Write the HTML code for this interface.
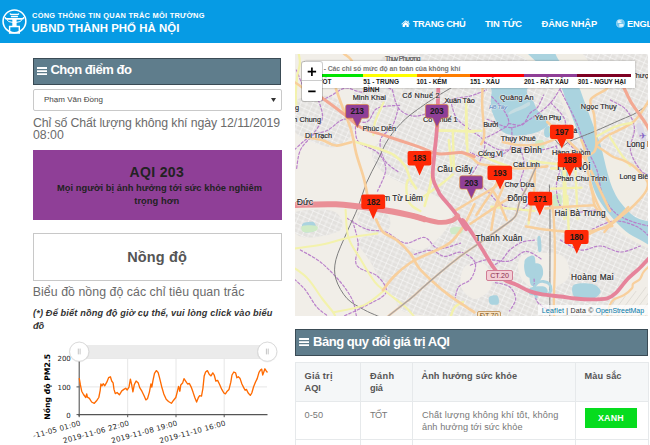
<!DOCTYPE html>
<html lang="vi">
<head>
<meta charset="utf-8">
<title>Cổng thông tin quan trắc môi trường - UBND Thành phố Hà Nội</title>
<style>
html,body{margin:0;padding:0;}
body{width:650px;height:445px;overflow:hidden;background:#fff;position:relative;font-family:"Liberation Sans","DejaVu Sans",sans-serif;color:#333;}
.a{position:absolute;box-sizing:border-box;}
.t{position:absolute;white-space:nowrap;}
#hdr{position:absolute;left:0;top:0;width:650px;height:43px;background:#069be4;}
.bar{position:absolute;background:#5f7d8c;border:1px solid #3a4b55;box-sizing:border-box;}
#map{position:absolute;left:294.6px;top:54px;width:353.4px;height:262px;background:#f1eee8;overflow:hidden;}
#map .t{margin-top:-54px;transform:translateX(-294.6px);}
.cell{position:absolute;box-sizing:border-box;border:1px solid #e6e9eb;}
</style>
</head>
<body>

<div id="hdr"></div>
<svg class="a" style="left:0;top:5px" width="32" height="33" viewBox="0 5 32 33">
<circle cx="14.45" cy="21.3" r="11.4" fill="none" stroke="#fff" stroke-width="1.550"/>
<g fill="none" stroke="#fff" stroke-linecap="round" stroke-linejoin="round">
<path d="M10.300 13.900q.5.700 1.300.6h5.700q.8.100 1.300-.6" stroke-width="1.300"/>
<path d="M11.400 16.700h6.100" stroke-width="1.200"/>
<path d="M5.300 17.700q.2 1.200 1.500 1.200h15.300q1.300 0 1.500-1.200" stroke-width="1.600"/>
<path d="M6.900 19.900q1 2.400 5.600 2.500M22 19.900q-1 2.400-5.600 2.500" stroke-width="1"/>
<path d="M9.600 26.500h9.700v6.600h-9.700z" stroke-width="1.400" stroke-linejoin="miter"/>
</g>
<path d="M12.300 19h4.300v7h-4.300z" fill="#fff"/>
</svg>
<svg class="a" style="left:400.9px;top:19.500px" width="9.4" height="7.6" viewBox="0 0 18 14.5"><path d="M9 0.600L0.600 7.600l1 1.200L9 2.700l7.400 6.100 1-1.200-2.700-2.300V1.500h-2v2.100zM3.100 8.700v5.300h4.400v-3.800h3v3.800h4.400V8.700L9 3.800z" fill="#fff"/></svg>
<svg class="a" style="left:616px;top:18.8px" width="8.8" height="8.8" viewBox="0 0 16 16"><circle cx="8" cy="8" r="7.3" fill="#fff" opacity="0.42"/><path d="M3 2.500h7v2H7.500v1H10v2H3zM6 9h7.500v5H6z" fill="#fff" opacity="0.8"/><path d="M8 0.700a7.300 7.300 0 1 0 0 14.600a7.300 7.300 0 1 0 0-14.600" fill="none" stroke="#fff" stroke-width="0.9" opacity="0.75"/></svg>
<div class="bar" style="left:33px;top:57.7px;width:248.2px;height:27.1px;"></div>
<svg class="a" style="left:36.8px;top:66.6px" width="10.4" height="8.2" viewBox="0 0 10.4 8.2"><path d="M0 0h10.400v1.900H0zM0 3.150h10.400v1.900H0zM0 6.300h10.400v1.900H0z" fill="#fff"/></svg>
<div class="a" style="left:33px;top:89.2px;width:248.5px;height:21.5px;border:1px solid #c9c9c9;border-radius:2px;background:#fff;"></div>
<svg class="a" style="left:270.6px;top:98.2px" width="5" height="4" viewBox="0 0 5 4"><path d="M0 0h5L2.500 4z" fill="#333"/></svg>
<div class="a" style="left:33px;top:149.5px;width:248.5px;height:70.6px;background:#8f3f97;"></div>
<div class="a" style="left:32.6px;top:233.2px;width:249px;height:48px;border:1px solid #c8c8c8;background:#fff;"></div>
<svg width="260" height="115" viewBox="33 335 260 115" style="position:absolute;left:33px;top:335px;overflow:hidden;" font-family='DejaVu Sans, Liberation Sans, sans-serif'><line x1="127.7" y1="358" x2="127.7" y2="414.5" stroke="#e6e6e6" stroke-width="1"/><line x1="176" y1="358" x2="176" y2="414.5" stroke="#e6e6e6" stroke-width="1"/><line x1="224.2" y1="358" x2="224.2" y2="414.5" stroke="#e6e6e6" stroke-width="1"/><line x1="79" y1="358.4" x2="267" y2="358.4" stroke="#e6e6e6" stroke-width="1"/><line x1="79" y1="386.9" x2="267" y2="386.9" stroke="#e6e6e6" stroke-width="1"/><rect x="79" y="345" width="188" height="13.4" fill="#ebebeb"/><line x1="79.2" y1="358" x2="79.2" y2="416.2" stroke="#555" stroke-width="1.1"/><line x1="78" y1="414.6" x2="267.5" y2="414.6" stroke="#555" stroke-width="1.1"/><line x1="79.2" y1="414.6" x2="79.2" y2="417.2" stroke="#555" stroke-width="1"/><line x1="127.7" y1="414.6" x2="127.7" y2="417.2" stroke="#555" stroke-width="1"/><line x1="176" y1="414.6" x2="176" y2="417.2" stroke="#555" stroke-width="1"/><line x1="224.2" y1="414.6" x2="224.2" y2="417.2" stroke="#555" stroke-width="1"/><line x1="76.5" y1="358.4" x2="79.2" y2="358.4" stroke="#555" stroke-width="1"/><line x1="76.5" y1="386.9" x2="79.2" y2="386.9" stroke="#555" stroke-width="1"/><line x1="76.5" y1="414.6" x2="79.2" y2="414.6" stroke="#555" stroke-width="1"/><path d="M79.3 378.6 L80.4 384.9 L81.7 391.2 L83.5 394.5 L85.8 397.5 L86.7 393.9 L87.4 397.2 L89.4 398.4 L91.6 402.0 L94.3 403.3 L97.0 400.2 L98.8 397.5 L100.2 390.3 L100.9 384.0 L102.0 385.8 L103.3 383.7 L104.7 385.8 L106.8 382.2 L108.6 377.7 L110.4 376.8 L111.7 381.0 L113.1 382.8 L114.0 389.4 L115.3 393.6 L117.1 392.5 L119.4 394.8 L121.8 390.9 L123.9 389.4 L125.7 388.2 L127.2 390.0 L129.0 387.1 L130.4 379.2 L131.7 384.9 L132.9 391.8 L134.3 384.6 L136.1 381.0 L138.3 383.1 L139.7 387.6 L141.9 391.2 L144.1 395.7 L145.9 399.9 L147.6 398.4 L149.4 392.1 L150.9 384.0 L151.8 387.1 L153.0 380.4 L154.5 373.3 L156.3 370.6 L158.1 372.4 L159.5 377.7 L161.7 386.7 L163.8 393.9 L166.2 399.3 L168.5 401.5 L171.4 403.3 L173.6 400.2 L175.8 397.5 L177.2 392.1 L178.6 386.4 L179.9 391.2 L180.8 384.9 L182.6 383.1 L184.0 378.6 L185.8 381.3 L187.6 384.0 L189.4 383.5 L191.2 387.1 L193.0 392.1 L194.8 397.5 L196.6 402.0 L198.4 397.5 L199.7 395.7 L201.5 396.1 L202.9 388.5 L204.2 375.9 L205.6 372.0 L207.4 370.6 L209.2 374.2 L211.0 375.9 L212.8 372.9 L214.2 375.0 L215.8 381.0 L217.6 380.4 L219.4 384.0 L221.8 389.4 L223.9 393.0 L225.4 393.9 L227.2 391.2 L229.0 389.4 L230.8 382.2 L232.0 375.0 L233.8 372.0 L235.6 372.9 L236.9 377.7 L238.3 376.8 L240.1 378.6 L241.9 384.0 L243.7 387.6 L245.1 390.3 L246.4 389.4 L248.2 393.0 L250.3 395.4 L251.8 393.0 L253.6 386.7 L255.4 382.2 L257.2 378.6 L259.0 372.4 L260.8 369.7 L261.7 369.1 L262.7 375.0 L263.8 372.0 L264.9 368.8 L266.2 370.9 L267.1 372.0" fill="none" stroke="#ff6a00" stroke-width="1.35" stroke-linejoin="round" stroke-linecap="round"/><circle cx="79.2" cy="352" r="10.4" fill="#000" opacity="0.06"/><circle cx="79.2" cy="351.7" r="9.6" fill="#fff" stroke="#d4d4d4" stroke-width="0.8"/><path d="M78.3 348.6V354.4M80.1 348.6V354.4" stroke="#aaa" stroke-width="0.7"/><circle cx="267.3" cy="352" r="10.4" fill="#000" opacity="0.06"/><circle cx="267.3" cy="351.7" r="9.6" fill="#fff" stroke="#d4d4d4" stroke-width="0.8"/><path d="M266.4 348.6V354.4M268.2 348.6V354.4" stroke="#aaa" stroke-width="0.7"/><text x="70.8" y="361.0" text-anchor="end" font-size="7" fill="#222">200</text><text x="70.8" y="389.5" text-anchor="end" font-size="7" fill="#222">100</text><text x="70.8" y="417.5" text-anchor="end" font-size="7" fill="#222">0</text><text transform="translate(49.6 386.8) rotate(-90)" text-anchor="middle" font-size="7.700" font-weight="bold" fill="#000">Nồng độ PM2.5</text><text transform="translate(81.2 425.2) rotate(-15.3)" text-anchor="end" font-size="7.200" letter-spacing="0.22" fill="#222">2019-11-05 01:00</text><text transform="translate(129.7 425.2) rotate(-15.3)" text-anchor="end" font-size="7.200" letter-spacing="0.22" fill="#222">2019-11-06 22:00</text><text transform="translate(178.0 425.2) rotate(-15.3)" text-anchor="end" font-size="7.200" letter-spacing="0.22" fill="#222">2019-11-08 19:00</text><text transform="translate(226.2 425.2) rotate(-15.3)" text-anchor="end" font-size="7.200" letter-spacing="0.22" fill="#222">2019-11-10 16:00</text></svg>
<div id="map">
<svg id="mapsvg" width="353.4" height="262" viewBox="294.6 54 353.4 262" style="position:absolute;left:0;top:0;">
<defs><filter id="mb" x="-5%" y="-5%" width="110%" height="110%"><feGaussianBlur stdDeviation="0.45"/></filter></defs>
<defs><pattern id="st" width="11" height="9" patternUnits="userSpaceOnUse" patternTransform="rotate(24)"><path d="M0 2.500H11M0 7H11M3 0V9M8.500 0V9" stroke="#fff" stroke-width="0.8" fill="none" opacity="0.6"/></pattern></defs>
<g filter="url(#mb)">
<rect x="290" y="50" width="365" height="270" fill="#f1eee8"/>
<path d="M398 54C439.3 49.7 606.3 10.3 648 54C689.7 97.7 684.3 272.3 648 316C611.7 359.7 472.7 319.3 430 316C387.3 312.7 402 305 392 296C382 287 375.7 271.3 370 262C364.3 252.7 355.3 244.3 358 240C360.7 235.7 376 234.3 386 236C396 237.7 409 250 418 250C427 250 434.3 242 440 236C445.7 230 452.7 220.7 452 214C451.3 207.3 444 201 436 196C428 191 413.3 188.3 404 184C394.7 179.7 385.3 175.7 380 170C374.7 164.3 370 156.3 372 150C374 143.7 386.7 139 392 132C397.3 125 402.7 116.7 404 108C405.3 99.3 401 89 400 80C399 71 356.7 58.3 398 54Z" fill="#e3e1de"/>
<path d="M398 54C439.3 49.7 606.3 10.3 648 54C689.7 97.7 684.3 272.3 648 316C611.7 359.7 472.7 319.3 430 316C387.3 312.7 402 305 392 296C382 287 375.7 271.3 370 262C364.3 252.7 355.3 244.3 358 240C360.7 235.7 376 234.3 386 236C396 237.7 409 250 418 250C427 250 434.3 242 440 236C445.7 230 452.7 220.7 452 214C451.3 207.3 444 201 436 196C428 191 413.3 188.3 404 184C394.7 179.7 385.3 175.7 380 170C374.7 164.3 370 156.3 372 150C374 143.7 386.7 139 392 132C397.3 125 402.7 116.7 404 108C405.3 99.3 401 89 400 80C399 71 356.7 58.3 398 54Z" fill="url(#st)"/>
<path d="M294 102.6C296.8 97.1 304.2 98 310.6 97.1C317.1 96.2 326.3 94.3 332.8 97.1C339.2 99.8 346.2 107.7 349.4 113.7C352.6 119.7 354.5 127.5 352.2 133.1C349.8 138.6 342.5 145.5 335.5 146.9C328.6 148.3 317.5 144.2 310.6 141.4C303.7 138.6 296.8 136.8 294 130.3C291.2 123.8 291.2 108.2 294 102.6Z" fill="#e3e1de"/>
<path d="M294 102.6C296.8 97.1 304.2 98 310.6 97.1C317.1 96.2 326.3 94.3 332.8 97.1C339.2 99.8 346.2 107.7 349.4 113.7C352.6 119.7 354.5 127.5 352.2 133.1C349.8 138.6 342.5 145.5 335.5 146.9C328.6 148.3 317.5 144.2 310.6 141.4C303.7 138.6 296.8 136.8 294 130.3C291.2 123.8 291.2 108.2 294 102.6Z" fill="url(#st)"/>
<path d="M354.9 88.8C359.1 83.2 376.2 83.7 385.4 86C394.6 88.3 408 95.7 410.3 102.6C412.6 109.5 404.8 122.5 399.2 127.5C393.7 132.6 383.5 134.5 377.1 133.1C370.6 131.7 364.2 126.6 360.5 119.2C356.8 111.8 350.8 94.3 354.9 88.8Z" fill="#e3e1de"/>
<path d="M354.9 88.8C359.1 83.2 376.2 83.7 385.4 86C394.6 88.3 408 95.7 410.3 102.6C412.6 109.5 404.8 122.5 399.2 127.5C393.7 132.6 383.5 134.5 377.1 133.1C370.6 131.7 364.2 126.6 360.5 119.2C356.8 111.8 350.8 94.3 354.9 88.8Z" fill="url(#st)"/>
<path d="M294 212.6C300.5 209.2 324.9 208.5 332.8 211.2C340.6 214 344.8 224.8 341.1 229.2C337.4 233.6 318.5 237.1 310.6 237.5C302.8 238 296.8 236.2 294 232C291.2 227.8 287.5 216.1 294 212.6Z" fill="#e3e1de"/>
<path d="M294 212.6C300.5 209.2 324.9 208.5 332.8 211.2C340.6 214 344.8 224.8 341.1 229.2C337.4 233.6 318.5 237.1 310.6 237.5C302.8 238 296.8 236.2 294 232C291.2 227.8 287.5 216.1 294 212.6Z" fill="url(#st)"/>
<path d="M357.7 212.6C360.9 209.4 380.3 209.8 385.4 212.6C390.5 215.4 391.4 226 388.2 229.2C384.9 232.5 371.1 234.8 366 232C360.9 229.2 354.5 215.8 357.7 212.6Z" fill="#e3e1de"/>
<path d="M357.7 212.6C360.9 209.4 380.3 209.8 385.4 212.6C390.5 215.4 391.4 226 388.2 229.2C384.9 232.5 371.1 234.8 366 232C360.9 229.2 354.5 215.8 357.7 212.6Z" fill="url(#st)"/>
<path d="M522.6 255.5C529.5 252.1 554 251.6 561.4 255.5C568.8 259.5 570.6 273.3 566.9 279.1C563.2 284.8 547.1 290.6 539.2 290.2C531.4 289.7 522.6 282.1 519.8 276.3C517.1 270.5 515.7 259 522.6 255.5Z" fill="#f1eee8"/>
<path d="M625.1 279.1C631.1 273.1 645.9 259.1 650 265.2C654.2 271.4 656 307.5 650 315.9C644 324.4 620 318.4 614 315.9C608 313.5 612.2 307.4 614 301.2C615.9 295.1 619.1 285.1 625.1 279.1Z" fill="#f1eee8"/>
<path d="M464.6 266.5C468.7 262.8 480.5 261.1 484.9 264.5C489.2 267.8 492.6 281 490.9 286.7C489.2 292.5 479.8 298.9 474.7 298.9C469.7 298.9 462.2 292.1 460.6 286.7C458.9 281.3 460.6 270.2 464.6 266.5Z" fill="#f1eee8"/>
<path d="M548 46C558.8 45.7 567 43.7 575 48C583 52.3 590.8 65.2 596 72C601.2 78.8 606.7 84.5 606 89C605.3 93.5 594 94.8 592 99C590 103.2 593.3 108.8 594 114C594.7 119.2 595.5 124.7 596 130C596.5 135.3 595.9 142.7 597 146C598.1 149.3 599.7 148.2 602.4 150C605.1 151.8 609.4 155.2 613 157C616.6 158.8 620.7 159.3 624 160.8C627.3 162.3 630 163.6 633 166C636 168.4 639.6 172.3 642 175C644.4 177.7 646.7 179.7 647.3 182.4C647.9 185.1 647 188.3 645.5 191.3C644 194.3 641 197.3 638.3 200.3C635.6 203.3 630.7 205.7 629.3 209.3C627.9 212.9 625.7 217.7 630 222C634.3 226.3 650.8 230.3 655 235C659.2 239.7 660 249.8 655 250C650 250.2 633.2 241.3 625 236C616.8 230.7 610.7 222.8 606 218C601.3 213.2 599.5 211 597 207C594.5 203 592.7 199.3 591 194C589.3 188.7 588.5 182 587 175C585.5 168 584.2 158.8 582 152C579.8 145.2 577 141.3 574 134C571 126.7 567.5 115.7 564 108C560.5 100.3 557 94 553 88C549 82 544.8 77 540 72C535.2 67 529 61.7 524 58C519 54.3 506 52 510 50C514 48 537.2 46.3 548 46Z" fill="#f0ede5"/>
<path d="M505 46C500.7 47 517.2 47.7 522 50C526.8 52.3 529.5 56.2 534 60C538.5 63.8 544.6 68.5 549 73C553.4 77.5 557.8 82.4 560.6 87.2C563.4 92 564.2 96.8 566 101.6C567.8 106.4 569.6 111.2 571.4 116C573.2 120.8 575 125.6 576.8 130.4C578.6 135.2 580.4 139.9 582.2 144.7C584 149.5 586.4 154.3 587.6 159.1C588.8 163.9 588.5 168.7 589.4 173.5C590.3 178.3 591.2 183.1 593 187.9C594.8 192.7 597 197.5 600 202.3C603 207.1 606.8 211.9 611 216.7C615.2 221.5 620.2 227.1 625 231C629.8 234.9 635 237.5 640 240C645 242.5 652.5 248.3 655 246C657.5 243.7 655.8 230 655 226C654.2 222 653.5 223.6 650 222C646.5 220.4 639.3 220 634.3 216.7C629.3 213.4 623.7 207.1 620 202.3C616.3 197.5 614.1 192.7 612 187.9C609.9 183.1 608.7 178.3 607.3 173.5C605.9 168.7 604.9 163.9 603.7 159.1C602.5 154.3 601.6 149.5 600.1 144.7C598.6 139.9 596.6 135.2 594.8 130.4C593 125.6 591.2 120.8 589.4 116C587.6 111.2 585.8 106.4 584 101.6C582.2 96.8 580.9 92 578.6 87.2C576.3 82.4 573.3 77.4 570 73C566.7 68.6 561.8 64.8 559 61C556.2 57.2 554.8 52.8 553 50C551.2 47.2 556 44.7 548 44C540 43.3 509.3 45 505 46Z" fill="#aad3df"/>
<path d="M493.1 82.8C487.5 84.4 491.7 88.9 491.3 92C490.8 95.1 490.5 98.1 490.5 101.2C490.5 104.2 490.6 107.5 491.3 110.3C491.9 113.1 493.3 115.6 494.3 118C495.4 120.4 496.4 122.8 497.4 124.9C498.4 126.9 498.9 128.7 500.4 130.2C502 131.7 504 133.1 506.6 134C509.1 134.9 512.4 135.4 515.7 135.6C519 135.7 523.1 135.3 526.4 134.8C529.7 134.3 532.8 133.5 535.6 132.5C538.4 131.5 541.3 129.9 543.2 128.7C545.2 127.4 547.1 126.4 547.5 124.9C547.9 123.3 546.5 121.2 545.5 119.5C544.6 117.9 543.1 116.4 541.7 114.9C540.3 113.4 538.3 111.9 537.1 110.3C536 108.8 535.5 107.3 534.8 105.8C534.1 104.2 533.9 102.4 532.8 101.2C531.8 99.9 529.8 99.6 528.7 98.1C527.7 96.6 527 94.5 526.4 92C525.8 89.5 530.8 84.4 525.2 82.8C519.7 81.3 498.8 81.3 493.1 82.8Z" fill="#aad3df"/>
<path d="M528.7 102.1C527.4 102.1 524.5 104.2 521.8 105.4C519.2 106.7 515 108.1 512.7 109.4C510.4 110.7 508.7 112.2 508.1 113.1C507.5 114 508 114.9 509.3 114.6C510.6 114.4 513.4 112.7 516 111.6C518.6 110.4 522.7 109 524.9 107.9C527.1 106.8 528.8 106.1 529.5 105.1C530.1 104.2 530 102 528.7 102.1Z" fill="#c6dde2"/>
<path d="M544.3 128.4C545.1 126.8 547.6 125.7 548.7 126.2C549.9 126.7 551.3 129.6 551.2 131.4C551.1 133.3 549.3 136.5 548.1 137.2C547 137.9 544.8 137.2 544.2 135.7C543.5 134.2 543.5 129.9 544.3 128.4Z" fill="#aad3df"/>
<path d="M636 126C636 123 639.3 121.7 641 124C642.7 126.3 646 137 646 140C646 143 642.7 144.3 641 142C639.3 139.7 636 129 636 126Z" fill="#dcd8e6"/>
<path d="M524 264C524.8 261.7 529 261.3 531 262C533 262.7 535.5 265.5 536 268C536.5 270.5 535.7 275.7 534 277C532.3 278.3 527.7 278.2 526 276C524.3 273.8 523.2 266.3 524 264Z" fill="#aad3df"/>
<path d="M573 285.2C575.8 282.8 587.3 283 591.8 284.1C596.4 285.1 600.2 289 600.2 291.5C600.2 294 596 297.9 591.8 299C587.7 300.2 578.4 300.8 575.2 298.5C572.1 296.2 570.2 287.6 573 285.2Z" fill="#aad3df"/>
<path d="M530 265.5C531.7 262.3 538 262.9 540.1 264.5C542.2 266 543.2 271.2 542.6 274.6C541.9 278 538.2 283.2 536.1 284.7C534 286.2 531 286.9 530 283.7C529 280.5 528.3 268.7 530 265.5Z" fill="#aad3df"/>
<path d="M530 287.7C532.4 286.4 541.5 285.7 544.2 286.7C546.9 287.7 548.6 292.5 546.2 293.8C543.8 295.2 532.7 295.8 530 294.8C527.3 293.8 527.6 289.1 530 287.7Z" fill="#aad3df"/>
<path d="M537 238C537.3 235.7 539.3 235 540 237C540.7 239 541.3 247.7 541 250C540.7 252.3 538.7 253 538 251C537.3 249 536.7 240.3 537 238Z" fill="#aad3df"/>
<path d="M549.2 127.5C549.9 126.3 551.9 124.5 553.1 124.8C554.3 125 556.5 127.7 556.4 129.2C556.3 130.7 553.8 133.2 552.5 133.6C551.2 134.1 549.2 133 548.6 132C548.1 131 548.5 128.7 549.2 127.5Z" fill="#aad3df"/>
<path d="M524.3 260.4C525.4 257.4 532.4 253.7 534 256.4C535.7 259.1 535.2 273.6 534 276.6C532.9 279.6 529 277.3 527.4 274.6C525.7 271.9 523.2 263.4 524.3 260.4Z" fill="#aad3df"/>
<path d="M488.9 296.9C490.1 295.5 495.5 294.7 497 295.8C498.5 297 499.2 302.6 498 303.9C496.8 305.3 491.4 305.1 489.9 303.9C488.4 302.8 487.7 298.2 488.9 296.9Z" fill="#aad3df"/>
<path d="M561.4 170.5C562.2 169 565.9 167.9 566.9 169.1C567.9 170.2 568.3 175.9 567.5 177.4C566.6 178.9 563 179.1 561.9 177.9C560.9 176.8 560.6 171.9 561.4 170.5Z" fill="#aad3df"/>
<path d="M302.3 223.7C303.9 222.1 311.3 221.2 313.4 222.3C315.5 223.5 316.4 229 314.8 230.6C313.2 232.2 305.8 233.2 303.7 232C301.6 230.8 300.7 225.3 302.3 223.7Z" fill="#aad3df"/>
<path d="M535.1 141.4C536.2 140 541.1 139.3 542.6 140.3C544 141.3 544.8 146.1 543.7 147.5C542.6 148.9 537.3 149.6 535.9 148.6C534.5 147.6 534 142.8 535.1 141.4Z" fill="#cfeac6"/>
<path d="M450.4 228C452 226.8 458.7 226.2 460.6 227C462.4 227.9 463.1 231.9 461.6 233.1C460.1 234.3 453.3 234.9 451.4 234.1C449.6 233.3 448.9 229.2 450.4 228Z" fill="#cfeac6"/>
<path d="M294 196C294 196 294 196 294 196C294 196 294 196 294 196C294 196 294 196 294 196Z" fill="#cfeac6"/>
<path d="M302.1 226C304.3 225 314.1 225.2 316.3 226C318.5 226.8 317.4 230 315.3 231.1C313.1 232.1 305.3 232.9 303.1 232.1C300.9 231.2 299.9 227 302.1 226Z" fill="#cfeac6"/>
<path d="M553 195C554.2 193.2 559.2 193.2 560.5 195C561.8 196.8 561.8 203.8 560.5 205.5C559.2 207.2 554.2 207.2 553 205.5C551.8 203.8 551.8 196.8 553 195Z" fill="#cfeac6"/>
<g stroke="#d9d6cf" stroke-width="0.7" fill="none"><path d="M600.0 320L615.0 300.0"/><path d="M607.0 320L625.0 296.0"/><path d="M614.0 320L635.8 291.0"/><path d="M621.0 320L645.8 287.0"/><path d="M628.0 320L657.2 281.0"/><path d="M635.0 320L668.0 276.0"/><path d="M642.0 320L678.0 272.0"/><path d="M649.0 320L688.0 268.0"/></g>
<g fill="none" stroke-linecap="round" stroke-linejoin="round">
<path d="M296 70C297.5 73.3 301.3 85 305 90C308.7 95 313.8 99 318 100C322.2 101 325.5 98 330 96C334.5 94 339.7 88.7 345 88C350.3 87.3 356.5 92.7 362 92C367.5 91.3 373 84.3 378 84C383 83.7 389.7 89 392 90" stroke="#b77bc9" stroke-width="1.200" stroke-dasharray="2.6 2" opacity="0.95"/>
<path d="M318 100C318.7 103 323 112.2 322 118C321 123.8 315.7 129.7 312 135C308.3 140.3 302.7 144.2 300 150C297.3 155.8 296.7 166.7 296 170" stroke="#b77bc9" stroke-width="1.200" stroke-dasharray="2.6 2" opacity="0.95"/>
<path d="M392 90C393 93 394.7 103.7 398 108C401.3 112.3 406.7 115.3 412 116C417.3 116.7 423.7 114.7 430 112C436.3 109.3 443.3 102.7 450 100C456.7 97.3 464 97.7 470 96C476 94.3 483.3 91 486 90" stroke="#b77bc9" stroke-width="1.200" stroke-dasharray="2.6 2" opacity="0.95"/>
<path d="M398 108C397 111 395 120.7 392 126C389 131.3 381.3 134.3 380 140C378.7 145.7 381 154.7 384 160C387 165.3 395.7 170 398 172" stroke="#b77bc9" stroke-width="1.200" stroke-dasharray="2.6 2" opacity="0.95"/>
<path d="M450 100C451 103 452.7 113 456 118C459.3 123 465.3 126 470 130C474.7 134 482.3 137 484 142C485.7 147 482.3 154.3 480 160C477.7 165.7 471.7 173.3 470 176" stroke="#b77bc9" stroke-width="1.200" stroke-dasharray="2.6 2" opacity="0.95"/>
<path d="M484 142C486.7 143.3 494 149 500 150C506 151 513.3 148 520 148C526.7 148 534 150.3 540 150C546 149.7 553.3 146.7 556 146" stroke="#b77bc9" stroke-width="1.200" stroke-dasharray="2.6 2" opacity="0.95"/>
<path d="M520 148C520.7 151 524 160 524 166C524 172 519 178.3 520 184C521 189.7 525.7 196.7 530 200C534.3 203.3 543.3 203.3 546 204" stroke="#b77bc9" stroke-width="1.200" stroke-dasharray="2.6 2" opacity="0.95"/>
<path d="M556 146C556.7 149.3 560 159.3 560 166C560 172.7 556 179.3 556 186C556 192.7 556.8 201.7 560 206C563.2 210.3 569 211.3 575 212C581 212.7 592.5 210.3 596 210" stroke="#b77bc9" stroke-width="1.200" stroke-dasharray="2.6 2" opacity="0.95"/>
<path d="M470 176C472.7 178.3 481 185.3 486 190C491 194.7 494.3 200.7 500 204C505.7 207.3 515 210.7 520 210C525 209.3 528.3 201.7 530 200" stroke="#b77bc9" stroke-width="1.200" stroke-dasharray="2.6 2" opacity="0.95"/>
<path d="M610 100C612.7 101.7 622 105.3 626 110C630 114.7 633.3 121.3 634 128C634.7 134.7 629 143 630 150C631 157 636.7 165.7 640 170C643.3 174.3 648.3 175 650 176" stroke="#b77bc9" stroke-width="1.200" stroke-dasharray="2.6 2" opacity="0.95"/>
<path d="M560 240C563.3 241.7 573.3 249 580 250C586.7 251 593.3 245.7 600 246C606.7 246.3 613.3 252 620 252C626.7 252 636.7 247 640 246" stroke="#b77bc9" stroke-width="1.200" stroke-dasharray="2.6 2" opacity="0.95"/>
<path d="M300 250C303.3 252 313.3 256.7 320 262C326.7 267.3 334.7 275.7 340 282C345.3 288.3 349.3 294.3 352 300C354.7 305.7 355.3 313.3 356 316" stroke="#b77bc9" stroke-width="1.200" stroke-dasharray="2.6 2" opacity="0.95"/>
<path d="M560 90C562.5 95 571.3 112 575 120C578.7 128 579.5 132.1 582 138C584.5 143.9 587.3 149.8 589.8 155.4C592.3 161 594.9 165 597 171.6C599.1 178.2 599.4 188.1 602.4 195C605.4 201.9 609.9 208.5 615 213C620.1 217.5 627.2 219.8 633 222C638.8 224.2 647.2 225.7 650 226.4" stroke="#b77bc9" stroke-width="1.200" stroke-dasharray="2.6 2" opacity="0.95"/>
<path d="M491.3 96.6C493.3 98.9 500.7 105.9 503.5 110.3C506.3 114.8 509.1 119.8 508.1 123.3C507.1 126.9 501.2 129.3 497.4 131.7C493.6 134.2 487.2 136.8 485.2 137.8" stroke="#b77bc9" stroke-width="1.200" stroke-dasharray="2.6 2" opacity="0.95"/>
<path d="M508.1 123.3C510.4 123.6 518.3 126.5 521.8 124.9C525.4 123.2 526.9 116.3 529.5 113.4C532 110.5 534.8 110.3 537.1 107.3C539.4 104.2 542.2 97.1 543.2 95.1" stroke="#b77bc9" stroke-width="1.200" stroke-dasharray="2.6 2" opacity="0.95"/>
<path d="M294 149.7C296.8 147.4 305.1 139.1 310.6 135.8C316.2 132.6 321.7 133.1 327.2 130.3C332.8 127.5 337.4 120.6 343.8 119.2C350.3 117.8 360.5 123.8 366 122C371.5 120.2 371.5 110.9 377.1 108.2C382.6 105.4 395.5 105.8 399.2 105.4" stroke="#b77bc9" stroke-width="1.200" stroke-dasharray="2.6 2" opacity="0.95"/>
<path d="M354.9 122C355.4 125.2 354 136.3 357.7 141.4C361.4 146.5 372.5 147.8 377.1 152.5C381.7 157.1 385.4 162.6 385.4 169.1C385.4 175.5 378.5 187.5 377.1 191.2" stroke="#b77bc9" stroke-width="1.200" stroke-dasharray="2.6 2" opacity="0.95"/>
<path d="M346.6 218.2C349.8 220 359.5 226.9 366 229.2C372.5 231.5 378.9 229.7 385.4 232C391.8 234.3 398.3 242.2 404.8 243.1C411.2 244 418.6 236.6 424.2 237.5C429.7 238.5 432 247.7 438 248.6C444 249.5 456.5 244 460.2 243.1" stroke="#b77bc9" stroke-width="1.200" stroke-dasharray="2.6 2" opacity="0.95"/>
<path d="M352.2 220.9C353.1 224.6 357 235.7 357.7 243.1C358.4 250.5 353.1 259.7 356.3 265.2C359.5 270.8 372.2 271.7 377.1 276.3C381.9 280.9 387.7 287.8 385.4 292.9C383.1 298 370.2 302.9 363.2 306.8C356.3 310.6 347.1 314.4 343.8 315.9" stroke="#b77bc9" stroke-width="1.200" stroke-dasharray="2.6 2" opacity="0.95"/>
<path d="M294 279.1C295.8 280.9 301.4 285.5 305.1 290.2C308.8 294.8 312.5 302.5 316.2 306.8C319.8 311.1 325.4 314.4 327.2 315.9" stroke="#b77bc9" stroke-width="1.200" stroke-dasharray="2.6 2" opacity="0.95"/>
<path d="M486.6 119.2C490.8 120.6 503.7 128 511.5 127.5C519.4 127.1 527.2 120.6 533.7 116.5C540.2 112.3 545.7 107.7 550.3 102.6C554.9 97.5 559.5 88.8 561.4 86" stroke="#b77bc9" stroke-width="1.200" stroke-dasharray="2.6 2" opacity="0.95"/>
<path d="M550.3 102.6C552.6 105.4 561.4 112.8 564.2 119.2C566.9 125.7 563.2 134.9 566.9 141.4C570.6 147.8 583.1 155.2 586.3 158" stroke="#b77bc9" stroke-width="1.200" stroke-dasharray="2.6 2" opacity="0.95"/>
<path d="M511.5 127.5C511.1 131.2 512.9 144.6 508.8 149.7C504.6 154.8 493.1 157.5 486.6 158C480.2 158.5 472.8 153.4 470 152.5" stroke="#b77bc9" stroke-width="1.200" stroke-dasharray="2.6 2" opacity="0.95"/>
<path d="M470 265.2C472.8 264.3 480.2 260.4 486.6 259.7C493.1 259 502.3 262.5 508.8 261.1C515.2 259.7 519.8 251.6 525.4 251.4C530.9 251.2 539.2 258.3 542 259.7" stroke="#b77bc9" stroke-width="1.200" stroke-dasharray="2.6 2" opacity="0.95"/>
<path d="M533.7 279.1C534.2 282.8 533.2 295.7 536.5 301.2C539.7 306.8 550.3 310.5 553.1 312.3" stroke="#b77bc9" stroke-width="1.200" stroke-dasharray="2.6 2" opacity="0.95"/>
<path d="M591.8 229.2C595.5 227.8 606.6 221.4 614 220.9C621.4 220.5 630.2 223.7 636.2 226.5C642.2 229.2 647.7 235.7 650 237.5" stroke="#b77bc9" stroke-width="1.200" stroke-dasharray="2.6 2" opacity="0.95"/>
<path d="M414 254.3C416.7 253.7 425.1 250 430.2 250.3C435.3 250.6 439.3 256 444.4 256.4C449.4 256.7 455.5 251.3 460.6 252.3C465.6 253.3 473 258.1 474.7 262.4C476.4 266.8 473.4 274.6 470.7 278.6C468 282.7 461.2 283.4 458.5 286.7C455.8 290.1 455.2 296.9 454.5 298.9" stroke="#b77bc9" stroke-width="1.200" stroke-dasharray="2.6 2" opacity="0.95"/>
<path d="M490.9 266.5C492.6 265.5 498 263.1 501 260.4C504.1 257.7 505.8 253.3 509.1 250.3C512.5 247.3 517.1 243.9 521.3 242.2C525.4 240.5 531.9 240.5 534 240.2" stroke="#b77bc9" stroke-width="1.200" stroke-dasharray="2.6 2" opacity="0.95"/>
<path d="M495 282.7C497.3 283.4 505.8 284 509.1 286.7C512.5 289.4 515.2 294.8 515.2 298.9C515.2 302.9 510.2 309 509.1 311" stroke="#b77bc9" stroke-width="1.200" stroke-dasharray="2.6 2" opacity="0.95"/>
<path d="M426.9 102.6C423.2 105.4 411.2 113.2 404.8 119.2C398.3 125.2 392.8 131.7 388.2 138.6C383.5 145.5 380.8 153.4 377.1 160.8C373.4 168.2 369.2 175.2 366 182.9C362.8 190.6 360.9 198.9 357.7 207.1C354.5 215.3 350.3 223.2 346.6 232C342.9 240.8 337.4 251.8 335.5 259.7C333.7 267.5 333.7 272.6 335.5 279.1C337.4 285.5 342 293.4 346.6 298.5C351.2 303.5 358.2 306.6 363.2 309.5C368.3 312.4 372.9 314.1 377.1 315.9C381.2 317.8 386.3 319.8 388.2 320.6" stroke="#7d7d7d" stroke-width="1"/>
<path d="M549 185C549.1 190.8 549.5 198.2 549.6 220C549.7 241.8 549.4 300 549.4 316" stroke="#7d7d7d" stroke-width="1"/>
<path d="M552 136C553.5 137.7 558 145.2 561 146C564 146.8 564.6 143.4 570 141C575.4 138.6 585.2 135.1 593.6 131.6C602 128.1 613.2 122.9 620.3 119.8C627.4 116.7 631 115.7 636 112.7C641 109.7 647.7 103.8 650 102" stroke="#7d7d7d" stroke-width="1"/>
<path d="M426.9 102.6C430.6 100.3 442.6 92.5 449.1 88.8C455.5 85.1 462.9 81.8 465.7 80.5" stroke="#7d7d7d" stroke-width="1"/>
<path d="M536 297C535.6 295.7 533.3 291.3 533.5 289C533.7 286.7 535.4 284.2 537 283C538.6 281.8 541 281.3 543 281.5C545 281.7 547.8 282.6 549 284C550.2 285.4 550.7 288.2 550.5 290C550.3 291.8 548.4 294.2 548 295" stroke="#aad3df" stroke-width="2.8"/>
<path d="M294 248.6C298.6 247.9 312.5 246.3 321.7 244.5C330.9 242.6 340.2 239.4 349.4 237.5C358.6 235.7 372.5 234.1 377.1 233.4" stroke="#f3f2ac" stroke-width="2.1"/>
<path d="M345.2 209.8C345.7 214.5 345.5 229.2 348 237.5C350.5 245.8 356.1 252.3 360.5 259.7C364.8 267.1 370.2 276.5 374.3 281.8C378.5 287.2 380.3 287.4 385.4 291.5C390.5 295.7 400.2 302.7 404.8 306.8C409.4 310.8 411.7 314.4 413.1 315.9" stroke="#f3f2ac" stroke-width="2.1"/>
<path d="M294 268C296.3 269.8 303.2 274 307.8 279.1C312.5 284.2 317.5 292.9 321.7 298.5C325.8 304 330.5 309.1 332.8 312.3C335.1 315.5 335.1 316.9 335.5 317.8" stroke="#f3f2ac" stroke-width="2.1"/>
<path d="M332.8 312.3C337.8 311.2 354.9 308.8 363.2 305.4C371.5 301.9 379.4 293.8 382.6 291.5" stroke="#f3f2ac" stroke-width="2.1"/>
<path d="M353.5 141.4C357.5 142.5 370.4 146 377.1 148.3C383.8 150.6 389.1 152.2 393.7 155.2C398.3 158.2 402 162.2 404.8 166.3C407.5 170.5 408.5 176.5 410.3 180.2C412.2 183.8 414.9 187.1 415.8 188.5" stroke="#f3f2ac" stroke-width="2.6"/>
<path d="M432.5 166.3C432 169.5 431.1 179.1 429.7 185.7C428.3 192.3 425.1 202.5 424.2 205.9" stroke="#f3f2ac" stroke-width="2.6"/>
<path d="M438 130.3 L474 131.7" stroke="#f3f2ac" stroke-width="2.4"/>
<path d="M465.7 102.6 L467.1 155.2" stroke="#f3f2ac" stroke-width="2.4"/>
<path d="M452.4 130.3 L453.5 169.1" stroke="#f3f2ac" stroke-width="2.4"/>
<path d="M420.1 198.7C423.4 196.3 434.9 188.6 440.3 184.5C445.7 180.5 450.4 176.1 452.5 174.4" stroke="#f3f2ac" stroke-width="2.4"/>
<path d="M448.4 140 L451.4 170.4" stroke="#f3f2ac" stroke-width="2.4"/>
<path d="M490.9 206.8 L534 210.9" stroke="#f3f2ac" stroke-width="2.4"/>
<path d="M436.7 130.9 L480.8 130.9" stroke="#f3f2ac" stroke-width="2.4"/>
<path d="M465.6 108.7 L466.2 144.1" stroke="#f3f2ac" stroke-width="2.4"/>
<path d="M566.9 196 L568.3 230.6" stroke="#f3f2ac" stroke-width="2.4"/>
<path d="M529.5 209.8 L528.2 223.7" stroke="#f3f2ac" stroke-width="2.4"/>
<path d="M450.4 316.1C451.1 314.6 452.5 309.3 454.5 307C456.5 304.6 461.2 302.8 462.6 301.9" stroke="#f3f2ac" stroke-width="2.4"/>
<path d="M564.4 152.1 L565.4 206.8" stroke="#f3f2ac" stroke-width="2.4"/>
<path d="M530 161.3 L558.3 164.3" stroke="#f3f2ac" stroke-width="2.4"/>
<path d="M383.1 102.6C381.7 105.6 376.7 115.4 375 120.8C373.3 126.2 373.3 132.6 372.9 135" stroke="#f3f2ac" stroke-width="2.2"/>
<path d="M297.4 50C297.6 50.7 298 51.8 298.4 54C298.7 56.3 299.7 59.7 299.4 63.5C299.2 67.3 297.4 71.8 296.7 77C296.1 82.1 295.5 89.5 295.4 94.5C295.3 99.4 296 104.6 296.1 106.6" stroke="#f3f2ac" stroke-width="2.2"/>
<path d="M292.7 81.7C293.1 81.9 294.3 82.4 295.4 83C296.5 83.7 297.6 84.5 299.4 85.7C301.2 87 305.1 89.7 306.2 90.4" stroke="#f8cf9c" stroke-width="2.4"/>
<path d="M341.2 51.3C341.7 51.8 342.6 52.9 343.9 54C345.3 55.2 347.8 56.5 349.3 58.1C350.9 59.7 352.7 62.6 353.4 63.5" stroke="#f8cf9c" stroke-width="2.4"/>
<path d="M335.5 88.8C336.7 92 339.9 101.2 342.5 108.2C345 115.1 348.5 122.5 350.8 130.3C353.1 138.2 354.2 147.4 356.3 155.2C358.4 163.1 361.4 170.5 363.2 177.4C365.1 184.3 366.2 192 367.4 196.8C368.5 201.5 369.7 204.4 370.2 205.9" stroke="#f8cf9c" stroke-width="2.7"/>
<path d="M305.1 137.2C307.8 137.7 316.6 138.6 321.7 140C326.8 141.4 330.7 145.2 335.5 145.5C340.4 145.9 348.2 142.8 350.8 142.2" stroke="#f8cf9c" stroke-width="2.7"/>
<path d="M375.7 219.5C376.8 221.6 379.2 228.5 382.6 232C386.1 235.5 391.8 236.6 396.5 240.3C401.1 244 406.6 249.5 410.3 254.2C414 258.8 414.9 263.4 418.6 268C422.3 272.6 427.4 277.2 432.5 281.8C437.5 286.5 443.5 291.5 449.1 295.7C454.6 299.8 461.5 304 465.7 306.8C469.9 309.5 472.6 311.4 474 312.3" stroke="#f8cf9c" stroke-width="2.7"/>
<path d="M474 204.3C472.2 208 467.1 220 462.9 226.5C458.8 232.9 455.1 238.5 449.1 243.1C443.1 247.7 433.4 250.9 426.9 254.2C420.5 257.4 415.8 258.8 410.3 262.5C404.8 266.2 398.3 271.7 393.7 276.3C389.1 280.9 384.5 287.8 382.6 290.2" stroke="#f8cf9c" stroke-width="2.7"/>
<path d="M454.5 210.9C457.9 208.8 468 202.8 474.7 198.7C481.5 194.7 489.9 190.6 495 186.6C500 182.5 503.4 176.4 505.1 174.4" stroke="#f8cf9c" stroke-width="2.5"/>
<path d="M490.9 230.1C491.6 226.2 492.9 214.1 495 206.8C497 199.5 501.7 189.9 503.1 186.6" stroke="#f8cf9c" stroke-width="2.5"/>
<path d="M482.8 74.2C482.7 79.3 481.6 94.5 481.8 104.6C482 114.7 484 128.4 483.8 135C483.7 141.6 481.3 142.6 480.8 144.1" stroke="#f8cf9c" stroke-width="2.5"/>
<path d="M470 223.7C472.8 221.8 481.1 216.3 486.6 212.6C492.2 208.9 499.1 204.3 503.2 201.5C507.4 198.8 510.2 196.9 511.5 196" stroke="#f8cf9c" stroke-width="2.5"/>
<path d="M525.4 226.5C530 227.2 543.8 229.7 553.1 230.6C562.3 231.5 572.5 232.5 580.8 232C589.1 231.5 596.9 230.2 602.9 227.8C608.9 225.5 612.6 221.6 616.8 218.2C620.9 214.7 626 208.9 627.9 207.1" stroke="#f8cf9c" stroke-width="2.5"/>
<path d="M588.7 234.1C590.4 233.3 595.1 230.4 598.8 229C602.5 227.7 608.9 226.5 611 226" stroke="#f8cf9c" stroke-width="2.5"/>
<path d="M607 316C607.3 314.3 607.9 308.8 609 306C610.1 303.2 611.1 301.2 613.6 299.4C616.1 297.6 620.7 296.9 623.7 295C626.7 293.1 630.1 290.1 631.6 288.2C633.1 286.3 631.4 285.2 632.7 283.7C634 282.2 637.7 281.1 639.4 279.2C641.1 277.3 641.4 274.6 642.8 272.5C644.2 270.4 645.9 269 647.9 266.9C649.9 264.8 653.8 261.1 655 260" stroke="#f8cf9c" stroke-width="2.2"/>
<path d="M460.6 152C462.5 153 468.8 156 472 158C475.2 160 475.3 162.6 480 164C484.7 165.4 493.3 165.8 500 166.5C506.7 167.2 512.2 168.5 520 168.5C527.8 168.5 542.3 166.8 546.8 166.4" stroke="#f8cf9c" stroke-width="2.6"/>
<path d="M508.3 166.4C507 168.1 502.9 172.5 500.2 176.6C497.5 180.6 494.8 186.3 492.1 190.7C489.4 195.1 486.7 198.8 484 202.9C481.3 206.9 477.3 213 476 215" stroke="#f8cf9c" stroke-width="2.5"/>
<path d="M492.1 190.7C492.8 191.7 493.8 191.9 496.2 196.8C498.6 201.7 504.6 216.2 506.3 220.1" stroke="#f8cf9c" stroke-width="2.5"/>
<path d="M534.7 166.4C534.5 170.5 534.3 184 533.6 190.7C533 197.5 531.5 202 530.6 206.9C529.8 211.8 528.9 217.9 528.6 220.1" stroke="#f8cf9c" stroke-width="2.5"/>
<path d="M546.8 121.9C549.2 123.9 557.3 130.7 561 134C564.7 137.4 566.4 139.4 569.1 142.1C571.8 144.8 574.5 147.2 577.2 150.2C579.9 153.3 582.6 156 585.3 160.4C588 164.8 590.9 171.5 593.4 176.6C595.8 181.6 597.3 185 600 190.7C602.7 196.5 608 207.6 609.6 211" stroke="#f8cf9c" stroke-width="2.6"/>
<path d="M502.3 142.1C505.3 142.7 514.1 144.8 520.5 145.2C526.9 145.5 534.7 145.4 540.7 144.2C546.8 143 554.2 139.1 556.9 138.1" stroke="#f8cf9c" stroke-width="2.4"/>
<path d="M550.9 168.5 L577.2 167.4" stroke="#f3f2ac" stroke-width="2.3"/>
<path d="M550.9 188.7 L581.2 187.7" stroke="#f3f2ac" stroke-width="2.3"/>
<path d="M563 168.5 L564 219.1" stroke="#f3f2ac" stroke-width="2.3"/>
<path d="M575.1 170.5 L577.2 219.1" stroke="#f3f2ac" stroke-width="2.3"/>
<path d="M480 154.3C482 155.3 487.4 158.3 492.1 160.4C496.9 162.4 505.6 165.4 508.3 166.4" stroke="#f3f2ac" stroke-width="2.3"/>
<path d="M545 208.6C547.8 208.3 556.3 207.4 562 207C567.7 206.6 573.7 206.3 579 206C584.3 205.7 591.5 205.3 594 205.2" stroke="#f8cf9c" stroke-width="2.5"/>
<path d="M590 185C590.4 186.7 591.7 191.7 592.4 195C593.1 198.3 592.9 202.2 594 205C595.1 207.8 598.2 210.8 599 212" stroke="#f8cf9c" stroke-width="2.5"/>
<path d="M420 211C418.8 210.3 415 208.8 412.9 207C410.8 205.2 408.6 203.6 407.5 200.2C406.4 196.8 406 190.1 406 186.7C406 183.3 407.2 181.1 407.5 180" stroke="#f3f2ac" stroke-width="2.4"/>
<path d="M612 80C611 81.5 609.6 85.8 606 89C602.4 92.2 592.5 95.2 590.4 99.4C588.3 103.6 592.8 109.2 593.6 114.3C594.4 119.4 594.6 125 595 130C595.4 134.9 596.2 140.3 596 144C595.8 147.7 595.3 150 593.6 152C591.9 154 587 155.3 585.7 156" stroke="#f8cf9c" stroke-width="2.5"/>
<path d="M650 98C649.6 98.6 649.3 99.2 647.8 101.7C646.2 104.2 643.2 109.3 640.7 112.7C638.2 116.1 636 119.4 632.9 122C629.8 124.6 626.4 126 621.9 128.4C617.4 130.8 610.2 133.7 606 136.3C601.8 138.9 598.2 142.7 596.7 144" stroke="#f8cf9c" stroke-width="2.5"/>
<path d="M596.7 136.3C599.1 135 606.8 130.4 611 128.4C615.2 126.4 618.6 125.4 622 124.5C625.4 123.6 629.8 123.2 631.3 123" stroke="#f3f2ac" stroke-width="2.3"/>
<path d="M609.3 136.3C610.1 137.6 611.9 140.7 614 144C616.1 147.3 619.3 152.3 622 156C624.7 159.7 628.7 164.3 630 166" stroke="#f3f2ac" stroke-width="2.3"/>
<path d="M618 75C619 77.3 622 84.3 624.2 89C626.4 93.7 628.8 99.1 631.3 103.3C633.8 107.5 636.6 110.9 639 114.3C641.4 117.7 643.6 120.8 645.4 123.7C647.2 126.7 649.2 130.6 650 132" stroke="#f3a892" stroke-width="3.2"/>
<path d="M596 146C597.1 146.7 599.6 148.2 602.4 150C605.2 151.8 609.4 155.2 613 157C616.6 158.8 620.7 159.3 624 160.8C627.3 162.3 630 163.6 633 166C636 168.4 639.6 172.3 642 175C644.4 177.7 646.7 179.7 647.3 182.4C647.9 185.1 647 188.3 645.5 191.3C644 194.3 641 197.3 638.3 200.3C635.6 203.3 632.6 206.3 629.3 209.3C626 212.3 621.8 215.6 618.5 218.3C615.2 221 611.9 223.2 609.5 225.5C607.1 227.8 604.9 230.9 604 232" stroke="#f8cf9c" stroke-width="2.5"/>
<path d="M581 140C581.6 141.7 583.4 145.3 584.4 150C585.4 154.7 586.1 162.6 587 168C587.9 173.4 588.7 177.9 589.8 182.4C590.9 186.9 591.9 190.8 593.4 195C594.9 199.2 596.7 203.6 598.8 207.5C600.9 211.4 603.8 215.2 606 218.3C608.2 221.4 611 224.7 612 226" stroke="#f8cf9c" stroke-width="2.5"/>
<path d="M551 200C551.4 203.3 552.9 210 553.5 220C554.1 230 554.5 246.7 554.5 260C554.5 273.3 553.6 290.3 553.5 300C553.4 309.7 553.9 315 554 318" stroke="#f8cf9c" stroke-width="2.3"/>
<path d="M310.6 91.5C312.2 92.5 314.3 92.9 320.3 97.1C326.3 101.2 339.9 111.4 346.6 116.5C353.3 121.5 354 124.3 360.5 127.5C366.9 130.8 375.7 132.6 385.4 135.8C395.1 139.1 409.8 143.9 418.6 146.9C427.4 149.9 431.1 152.9 438 153.8C444.9 154.8 454.2 152 460.2 152.5C466.2 152.9 471.7 155.9 474 156.6" stroke="#f3a892" stroke-width="3.0"/>
<path d="M385.4 319.2C385.8 318.7 384 319.4 388.2 315.9C392.3 312.4 404.3 303.4 410.3 298.5C416.3 293.5 418.8 290.7 424.2 286C429.5 281.3 436.6 275.3 442.3 270.5C448.1 265.8 452.5 261.9 458.5 257.4C464.6 252.8 471.4 248.4 478.8 243.2C486.2 238 497 230.6 503.1 226C509.1 221.4 512.5 219.9 515.2 215.9C517.9 211.8 517.2 206.8 519.3 201.7C521.3 196.6 524.7 191.2 527.4 185.5C530.1 179.8 534.1 170.3 535.5 167.3" stroke="#efc9a6" stroke-width="2.2"/>
<path d="M385.4 319.2C385.8 318.7 384 319.4 388.2 315.9C392.3 312.4 404.3 303.4 410.3 298.5C416.3 293.5 418.8 290.7 424.2 286C429.5 281.3 436.6 275.3 442.3 270.5C448.1 265.8 452.5 261.9 458.5 257.4C464.6 252.8 471.4 248.4 478.8 243.2C486.2 238 497 230.6 503.1 226C509.1 221.4 512.5 219.9 515.2 215.9C517.9 211.8 517.2 206.8 519.3 201.7C521.3 196.6 524.7 191.2 527.4 185.5C530.1 179.8 534.1 170.3 535.5 167.3" stroke="#a2a2a2" stroke-width="1.1"/>
<path d="M438.6 69.4C438.5 72.2 438.3 76.3 438 86C437.7 95.7 437.3 116 436.6 127.5C435.9 139.1 434.5 146.9 433.9 155.2C433.2 163.5 431.8 171.4 432.5 177.4C433.2 183.4 436.6 188.1 438 191.2C439.4 194.3 438 192.4 440.8 196C443.5 199.6 450.5 207.1 454.6 212.6C458.8 218.2 464.4 228 465.7 229.2C467 230.5 461 219 462.2 220C463.4 221 469.3 229.6 472.9 235C476.5 240.4 480.5 247.1 483.7 252.3C486.9 257.5 489.1 261.8 492.3 266.3C495.5 270.8 499.2 276.2 503.1 279.3C507.1 282.4 511.7 282.7 516 284.7C520.3 286.7 524.7 289.5 529 291.1C533.3 292.7 536.7 293.5 541.9 294.4C547.1 295.3 554.5 295.8 560 296.5C565.5 297.2 570 298 575 298.5C580 299 584.7 299.4 590 299.4C595.3 299.4 602.6 299.4 606.9 298.3C611.2 297.2 612.4 295.9 615.8 292.7C619.1 289.5 623.1 283.3 627 279.2C630.9 275.1 635.9 271.4 639.4 268C642.9 264.6 644.5 262.3 647.9 259C651.3 255.7 658 249.8 660 248" stroke="#e6839a" stroke-width="3.8"/>
<path d="M410.3 215.4C414.9 216.5 431.1 221.5 438 222.3C444.9 223.1 448.6 221.4 451.9 220.4C455.1 219.3 456.5 216.7 457.4 215.9" stroke="#ea8f96" stroke-width="4.8"/>
<path d="M291.2 205.1C298.6 205 321.2 203.7 335.5 204.3C349.8 205 364.6 207.2 377.1 209C389.5 210.9 402.5 213.7 410.3 215.4C418.2 217.1 421.9 218.6 424.2 219.3" stroke="#ea8f96" stroke-width="6.0"/>
</g>
</g>
</svg>
<div class="a" style="left:191.7px;top:216.0px;width:26.5px;height:11px;background:#f3cfd6;border:0.8px solid #d17d95;border-radius:2px;"></div>
<div class="a" style="left:182.2px;top:256.5px;width:24.6px;height:11px;background:#f8e2c4;border:0.8px solid #c49a63;border-radius:2px;"></div>
<div class="t" style="left:486.3px;top:270.6px;width:26.5px;text-align:center;font-size:7.2px;line-height:10px;color:#8a2a4c;"><span>CT.20</span></div>
<div class="t" style="left:476.8px;top:311.1px;width:24.6px;text-align:center;font-size:7.2px;line-height:10px;color:#7a5418;"><span>ĐT.70</span></div>
<div class="t" style="left:639px;top:131px;font-size:9px;line-height:10px;color:#8461c4;font-family:'DejaVu Sans',sans-serif;"><span>✈</span></div>
<div class="t" style="top:92.92px;font-size:7.3px;line-height:9.5px;left:352.70px;color:#2b2b2b;letter-spacing:0.105px;text-shadow:0 0 1px #fff,0 0 1px #fff,0 0 1.5px #fff,0 0 2px #fff;-webkit-text-stroke:0.22px currentColor;"><span id="m1">Minh Khai</span></div>
<div class="t" style="top:90.52px;font-size:7.3px;line-height:9.5px;left:402.30px;color:#2b2b2b;letter-spacing:0.312px;text-shadow:0 0 1px #fff,0 0 1px #fff,0 0 1.5px #fff,0 0 2px #fff;-webkit-text-stroke:0.22px currentColor;"><span id="m2">Cổ Nhuế 2</span></div>
<div class="t" style="top:96.32px;font-size:7.3px;line-height:9.5px;left:444.40px;color:#2b2b2b;letter-spacing:-0.152px;text-shadow:0 0 1px #fff,0 0 1px #fff,0 0 1.5px #fff,0 0 2px #fff;-webkit-text-stroke:0.22px currentColor;"><span id="m3">Xuân Tảo</span></div>
<div class="t" style="top:114.52px;font-size:7.3px;line-height:9.5px;left:423.00px;color:#2b2b2b;letter-spacing:-0.043px;text-shadow:0 0 1px #fff,0 0 1px #fff,0 0 1.5px #fff,0 0 2px #fff;-webkit-text-stroke:0.22px currentColor;"><span id="m4">Cổ Nhuế 1</span></div>
<div class="t" style="top:114.52px;font-size:7.3px;line-height:9.5px;left:321.00px;width:200px;margin-left:-200px;text-align:right;color:#2b2b2b;text-shadow:0 0 1px #fff,0 0 1px #fff,0 0 1.5px #fff,0 0 2px #fff;-webkit-text-stroke:0.22px currentColor;"><span id="m5">Kim Chung</span></div>
<div class="t" style="top:130.72px;font-size:7.3px;line-height:9.5px;left:305.10px;color:#2b2b2b;letter-spacing:-0.034px;text-shadow:0 0 1px #fff,0 0 1px #fff,0 0 1.5px #fff,0 0 2px #fff;-webkit-text-stroke:0.22px currentColor;"><span id="m6">Di Trạch</span></div>
<div class="t" style="top:124.12px;font-size:7.3px;line-height:9.5px;left:362.50px;color:#2b2b2b;letter-spacing:-0.019px;text-shadow:0 0 1px #fff,0 0 1px #fff,0 0 1.5px #fff,0 0 2px #fff;-webkit-text-stroke:0.22px currentColor;"><span id="m7">Phúc Diễn</span></div>
<div class="t" style="top:165.21px;font-size:8.2px;line-height:10.7px;left:437.30px;color:#2b2b2b;letter-spacing:0.157px;text-shadow:0 0 1px #fff,0 0 1px #fff,0 0 1.5px #fff,0 0 2px #fff;-webkit-text-stroke:0.22px currentColor;"><span id="m8">Cầu Giấy</span></div>
<div class="t" style="top:194.11px;font-size:8.2px;line-height:10.7px;left:422.80px;width:200px;margin-left:-200px;text-align:right;color:#2b2b2b;text-shadow:0 0 1px #fff,0 0 1px #fff,0 0 1.5px #fff,0 0 2px #fff;-webkit-text-stroke:0.22px currentColor;"><span id="m9">Nam Từ Liêm</span></div>
<div class="t" style="top:196.82px;font-size:8.6px;line-height:11.2px;left:313.10px;width:200px;margin-left:-200px;text-align:right;color:#2b2b2b;text-shadow:0 0 1px #fff,0 0 1px #fff,0 0 1.5px #fff,0 0 2px #fff;-webkit-text-stroke:0.22px currentColor;"><span id="m10">Hoài Đức</span></div>
<div class="t" style="top:92.92px;font-size:7.3px;line-height:9.5px;left:500.00px;color:#2b2b2b;letter-spacing:0.166px;text-shadow:0 0 1px #fff,0 0 1px #fff,0 0 1.5px #fff,0 0 2px #fff;-webkit-text-stroke:0.22px currentColor;"><span id="m11">Quảng An</span></div>
<div class="t" style="top:103.82px;font-size:6.0px;line-height:7.8px;left:489.00px;font-style:italic;color:#6c93c4;letter-spacing:-0.291px;text-shadow:0 0 1px #fff,0 0 1px #fff,0 0 1.5px #fff,0 0 2px #fff;-webkit-text-stroke:0.22px currentColor;"><span id="m12">Hồ Tây</span></div>
<div class="t" style="top:120.02px;font-size:7.3px;line-height:9.5px;left:483.20px;color:#2b2b2b;letter-spacing:-0.343px;text-shadow:0 0 1px #fff,0 0 1px #fff,0 0 1.5px #fff,0 0 2px #fff;-webkit-text-stroke:0.22px currentColor;"><span id="m13">Bưởi</span></div>
<div class="t" style="top:113.02px;font-size:7.3px;line-height:9.5px;left:534.80px;color:#2b2b2b;letter-spacing:-0.286px;text-shadow:0 0 1px #fff,0 0 1px #fff,0 0 1.5px #fff,0 0 2px #fff;-webkit-text-stroke:0.22px currentColor;"><span id="m14">Yên Phụ</span></div>
<div class="t" style="top:134.42px;font-size:7.3px;line-height:9.5px;left:500.80px;color:#2b2b2b;letter-spacing:-0.033px;text-shadow:0 0 1px #fff,0 0 1px #fff,0 0 1.5px #fff,0 0 2px #fff;-webkit-text-stroke:0.22px currentColor;"><span id="m15">Thụy Khuê</span></div>
<div class="t" style="top:148.62px;font-size:7.3px;line-height:9.5px;left:478.10px;color:#2b2b2b;letter-spacing:-0.238px;text-shadow:0 0 1px #fff,0 0 1px #fff,0 0 1.5px #fff,0 0 2px #fff;-webkit-text-stroke:0.22px currentColor;"><span id="m16">Cống Vị</span></div>
<div class="t" style="top:146.41px;font-size:8.2px;line-height:10.7px;left:511.10px;color:#2b2b2b;letter-spacing:0.172px;text-shadow:0 0 1px #fff,0 0 1px #fff,0 0 1.5px #fff,0 0 2px #fff;-webkit-text-stroke:0.22px currentColor;"><span id="m17">Ba Đình</span></div>
<div class="t" style="top:160.12px;font-size:7.3px;line-height:9.5px;left:513.10px;color:#2b2b2b;letter-spacing:-0.061px;text-shadow:0 0 1px #fff,0 0 1px #fff,0 0 1.5px #fff,0 0 2px #fff;-webkit-text-stroke:0.22px currentColor;"><span id="m18">Cát Linh</span></div>
<div class="t" style="top:179.82px;font-size:7.3px;line-height:9.5px;left:504.60px;color:#2b2b2b;letter-spacing:-0.108px;text-shadow:0 0 1px #fff,0 0 1px #fff,0 0 1.5px #fff,0 0 2px #fff;-webkit-text-stroke:0.22px currentColor;"><span id="m19">Chợ Dừa</span></div>
<div class="t" style="top:194.11px;font-size:8.2px;line-height:10.7px;left:507.40px;color:#2b2b2b;text-shadow:0 0 1px #fff,0 0 1px #fff,0 0 1.5px #fff,0 0 2px #fff;-webkit-text-stroke:0.22px currentColor;"><span id="m20">Đống Đa</span></div>
<div class="t" style="top:147.92px;font-size:7.3px;line-height:9.5px;left:552.00px;color:#2b2b2b;letter-spacing:-0.005px;text-shadow:0 0 1px #fff,0 0 1px #fff,0 0 1.5px #fff,0 0 2px #fff;-webkit-text-stroke:0.22px currentColor;"><span id="m21">Hàng Buồm</span></div>
<div class="t" style="top:159.24px;font-size:11px;line-height:14.3px;left:590.70px;width:200px;margin-left:-200px;text-align:right;color:#2b2b2b;text-shadow:0 0 1px #fff,0 0 1px #fff,0 0 1.5px #fff,0 0 2px #fff;-webkit-text-stroke:0.22px currentColor;"><span id="m22">Hà Nội</span></div>
<div class="t" style="top:174.12px;font-size:7.3px;line-height:9.5px;left:556.70px;color:#2b2b2b;letter-spacing:-0.030px;text-shadow:0 0 1px #fff,0 0 1px #fff,0 0 1.5px #fff,0 0 2px #fff;-webkit-text-stroke:0.22px currentColor;"><span id="m23">Phan Chu Trinh</span></div>
<div class="t" style="top:102.22px;font-size:7.3px;line-height:9.5px;left:580.80px;color:#2b2b2b;letter-spacing:0.094px;text-shadow:0 0 1px #fff,0 0 1px #fff,0 0 1.5px #fff,0 0 2px #fff;-webkit-text-stroke:0.22px currentColor;"><span id="m24">Ngọc Thụy</span></div>
<div class="t" style="top:140.11px;font-size:8.2px;line-height:10.7px;left:626.50px;color:#2b2b2b;text-shadow:0 0 1px #fff,0 0 1px #fff,0 0 1.5px #fff,0 0 2px #fff;-webkit-text-stroke:0.22px currentColor;"><span id="m25">Long Biên</span></div>
<div class="t" style="top:171.72px;font-size:7.3px;line-height:9.5px;left:619.50px;color:#2b2b2b;text-shadow:0 0 1px #fff,0 0 1px #fff,0 0 1.5px #fff,0 0 2px #fff;-webkit-text-stroke:0.22px currentColor;"><span id="m26">Long Biên</span></div>
<div class="t" style="top:126.32px;font-size:7.3px;line-height:9.5px;left:577.40px;width:200px;margin-left:-200px;text-align:right;color:#2b2b2b;text-shadow:0 0 1px #fff,0 0 1px #fff,0 0 1.5px #fff,0 0 2px #fff;-webkit-text-stroke:0.22px currentColor;"><span id="m27">Phúc Xá</span></div>
<div class="t" style="top:71.32px;font-size:7.3px;line-height:9.5px;left:631.30px;color:#2b2b2b;text-shadow:0 0 1px #fff,0 0 1px #fff,0 0 1.5px #fff,0 0 2px #fff;-webkit-text-stroke:0.22px currentColor;"><span id="m28">Thượng Thanh</span></div>
<div class="t" style="top:54.84px;font-size:6.8px;line-height:8.8px;left:385.00px;color:#555;letter-spacing:-0.626px;text-shadow:0 0 1px #fff,0 0 1px #fff,0 0 1.5px #fff,0 0 2px #fff;-webkit-text-stroke:0.22px currentColor;"><span id="m29">Thụy Phương</span></div>
<div class="t" style="top:209.41px;font-size:8.2px;line-height:10.7px;left:554.50px;color:#2b2b2b;letter-spacing:0.207px;text-shadow:0 0 1px #fff,0 0 1px #fff,0 0 1.5px #fff,0 0 2px #fff;-webkit-text-stroke:0.22px currentColor;"><span id="m30">Hai Bà Trưng</span></div>
<div class="t" style="top:233.51px;font-size:8.2px;line-height:10.7px;left:475.50px;color:#2b2b2b;letter-spacing:0.247px;text-shadow:0 0 1px #fff,0 0 1px #fff,0 0 1.5px #fff,0 0 2px #fff;-webkit-text-stroke:0.22px currentColor;"><span id="m31">Thanh Xuân</span></div>
<div class="t" style="top:273.11px;font-size:8.2px;line-height:10.7px;left:571.00px;color:#2b2b2b;letter-spacing:0.377px;text-shadow:0 0 1px #fff,0 0 1px #fff,0 0 1.5px #fff,0 0 2px #fff;-webkit-text-stroke:0.22px currentColor;"><span id="m32">Hoàng Mai</span></div>
<div class="t" style="top:102.72px;font-size:7.3px;line-height:9.5px;left:299.00px;width:200px;margin-left:-200px;text-align:right;color:#2b2b2b;text-shadow:0 0 1px #fff,0 0 1px #fff,0 0 1.5px #fff,0 0 2px #fff;-webkit-text-stroke:0.22px currentColor;"><span id="m33">Đức Giang</span></div>
<svg width="353.4" height="262" viewBox="294.6 54 353.4 262" style="position:absolute;left:0;top:0;"><path d="M347.2 104.5 H366.4 Q368.4 104.5 368.4 106.5 V116.2 Q368.4 118.2 366.4 118.2 H361.4 L356.9 127.7 L352.4 118.2 H347.2 Q345.2 118.2 345.2 116.2 V106.5 Q345.2 104.5 347.2 104.5 Z" fill="#8f3f97" stroke="#e08a2e" stroke-width="0.6"/><text x="356.7" y="114.5" text-anchor="middle" font-size="8.400" letter-spacing="-0.25" font-weight="bold" fill="#1a1a1a" font-family='Liberation Sans, sans-serif'>213</text><path d="M427.0 104.5 H445.8 Q447.8 104.5 447.8 106.5 V116.0 Q447.8 118.0 445.8 118.0 H441.1 L436.6 127.3 L432.1 118.0 H427.0 Q425.0 118.0 425.0 116.0 V106.5 Q425.0 104.5 427.0 104.5 Z" fill="#8f3f97" stroke="#e08a2e" stroke-width="0.6"/><text x="436.3" y="114.5" text-anchor="middle" font-size="8.400" letter-spacing="-0.25" font-weight="bold" fill="#1a1a1a" font-family='Liberation Sans, sans-serif'>203</text><path d="M551.6 124.7 H571.2 Q573.2 124.7 573.2 126.7 V136.9 Q573.2 138.9 571.2 138.9 H565.9 L561.4 148.4 L556.9 138.9 H551.6 Q549.6 138.9 549.6 136.9 V126.7 Q549.6 124.7 551.6 124.7 Z" fill="#fe2806"/><text x="561.3" y="135.0" text-anchor="middle" font-size="8.400" letter-spacing="-0.25" font-weight="bold" fill="#1a1a1a" font-family='Liberation Sans, sans-serif'>197</text><path d="M409.2 151.1 H429.0 Q431.0 151.1 431.0 153.1 V163.4 Q431.0 165.4 429.0 165.4 H423.7 L419.2 175.6 L414.7 165.4 H409.2 Q407.2 165.4 407.2 163.4 V153.1 Q407.2 151.1 409.2 151.1 Z" fill="#fe2806"/><text x="419.0" y="161.4" text-anchor="middle" font-size="8.400" letter-spacing="-0.25" font-weight="bold" fill="#1a1a1a" font-family='Liberation Sans, sans-serif'>183</text><path d="M489.1 165.7 H509.7 Q511.7 165.7 511.7 167.7 V178.0 Q511.7 180.0 509.7 180.0 H504.2 L499.7 189.5 L495.2 180.0 H489.1 Q487.1 180.0 487.1 178.0 V167.7 Q487.1 165.7 489.1 165.7 Z" fill="#fe2806"/><text x="499.3" y="176.0" text-anchor="middle" font-size="8.400" letter-spacing="-0.25" font-weight="bold" fill="#1a1a1a" font-family='Liberation Sans, sans-serif'>193</text><path d="M559.5 153.2 H579.4 Q581.4 153.2 581.4 155.2 V165.3 Q581.4 167.3 579.4 167.3 H573.8 L569.3 176.7 L564.8 167.3 H559.5 Q557.5 167.3 557.5 165.3 V155.2 Q557.5 153.2 559.5 153.2 Z" fill="#fe2806"/><text x="569.4" y="163.4" text-anchor="middle" font-size="8.400" letter-spacing="-0.25" font-weight="bold" fill="#1a1a1a" font-family='Liberation Sans, sans-serif'>188</text><path d="M461.3 175.8 H480.4 Q482.4 175.8 482.4 177.8 V187.1 Q482.4 189.1 480.4 189.1 H475.5 L471.0 198.7 L466.5 189.1 H461.3 Q459.3 189.1 459.3 187.1 V177.8 Q459.3 175.8 461.3 175.8 Z" fill="#8f3f97" stroke="#e08a2e" stroke-width="0.6"/><text x="470.8" y="185.6" text-anchor="middle" font-size="8.400" letter-spacing="-0.25" font-weight="bold" fill="#1a1a1a" font-family='Liberation Sans, sans-serif'>203</text><path d="M529.6 191.7 H549.7 Q551.7 191.7 551.7 193.7 V203.5 Q551.7 205.5 549.7 205.5 H543.9 L539.4 215.4 L534.9 205.5 H529.6 Q527.6 205.5 527.6 203.5 V193.7 Q527.6 191.7 529.6 191.7 Z" fill="#fe2806"/><text x="539.6" y="201.8" text-anchor="middle" font-size="8.400" letter-spacing="-0.25" font-weight="bold" fill="#1a1a1a" font-family='Liberation Sans, sans-serif'>171</text><path d="M362.9 194.6 H382.8 Q384.8 194.6 384.8 196.6 V207.0 Q384.8 209.0 382.8 209.0 H377.3 L372.8 219.2 L368.3 209.0 H362.9 Q360.9 209.0 360.9 207.0 V196.6 Q360.9 194.6 362.9 194.6 Z" fill="#fe2806"/><text x="372.8" y="205.0" text-anchor="middle" font-size="8.400" letter-spacing="-0.25" font-weight="bold" fill="#1a1a1a" font-family='Liberation Sans, sans-serif'>182</text><path d="M566.1 230.0 H586.2 Q588.2 230.0 588.2 232.0 V241.9 Q588.2 243.9 586.2 243.9 H580.9 L576.4 253.8 L571.9 243.9 H566.1 Q564.1 243.9 564.1 241.9 V232.0 Q564.1 230.0 566.1 230.0 Z" fill="#fe2806"/><text x="576.1" y="240.1" text-anchor="middle" font-size="8.400" letter-spacing="-0.25" font-weight="bold" fill="#1a1a1a" font-family='Liberation Sans, sans-serif'>180</text></svg>
<div class="a" style="left:10.4px;top:6.6px;width:330.4px;height:27.0px;background:#fff;box-shadow:0 0 2px rgba(0,0,0,0.35);"></div>
<div class="a" style="left:15.2px;top:19.5px;width:53.6px;height:3.5px;background:#00e400;"></div>
<div class="a" style="left:68.7px;top:19.5px;width:53.6px;height:3.5px;background:#ffff00;"></div>
<div class="a" style="left:122.2px;top:19.5px;width:53.7px;height:3.5px;background:#ff7e00;"></div>
<div class="a" style="left:175.8px;top:19.5px;width:53.6px;height:3.5px;background:#ff0000;"></div>
<div class="a" style="left:229.3px;top:19.5px;width:53.6px;height:3.5px;background:#8f3f97;"></div>
<div class="a" style="left:282.8px;top:19.5px;width:53.6px;height:3.5px;background:#7e0023;"></div>
<div class="t" style="top:63.51px;font-size:6.9px;line-height:9.0px;left:323.70px;font-weight:bold;color:#777;letter-spacing:-0.098px;"><span id="lg0">- Các chỉ số mức độ an toàn của không khí</span></div>
<div class="t" style="top:78.00px;font-size:6.5px;line-height:8.5px;left:309.30px;font-weight:bold;color:#222;letter-spacing:-0.042px;"><span id="lg1">0 - TỐT</span></div>
<div class="t" style="top:78.00px;font-size:6.5px;line-height:8.5px;left:363.30px;font-weight:bold;color:#222;letter-spacing:-0.042px;"><span id="lg2">51 - TRUNG</span></div>
<div class="t" style="top:86.30px;font-size:6.5px;line-height:8.5px;left:363.30px;font-weight:bold;color:#222;letter-spacing:0.102px;"><span id="lg2b">BÌNH</span></div>
<div class="t" style="top:78.00px;font-size:6.5px;line-height:8.5px;left:416.50px;font-weight:bold;color:#222;letter-spacing:-0.075px;"><span id="lg3">101 - KÉM</span></div>
<div class="t" style="top:78.00px;font-size:6.5px;line-height:8.5px;left:470.00px;font-weight:bold;color:#222;letter-spacing:-0.095px;"><span id="lg4">151 - XẤU</span></div>
<div class="t" style="top:78.00px;font-size:6.5px;line-height:8.5px;left:524.00px;font-weight:bold;color:#222;letter-spacing:-0.078px;"><span id="lg5">201 - RẤT XẤU</span></div>
<div class="t" style="top:78.00px;font-size:6.5px;line-height:8.5px;left:577.80px;font-weight:bold;color:#222;letter-spacing:-0.028px;"><span id="lg6">301 - NGUY HẠI</span></div>
<div class="a" style="left:6.0px;top:6.6px;width:22.4px;height:41.6px;background:rgba(0,0,0,0.2);border-radius:3px;"></div>
<div class="a" style="left:7.3px;top:7.9px;width:19.8px;height:19.6px;background:#fff;border-radius:2px 2px 0 0;border-bottom:0.7px solid #ccc;"></div>
<div class="a" style="left:7.3px;top:27.2px;width:19.8px;height:19.7px;background:#fff;border-radius:0 0 2px 2px;"></div>
<svg class="a" style="left:7.3px;top:7.9px" width="19.8" height="39" viewBox="0 0 19.8 39"><path d="M5.700 9.700h8.400M9.900 5.500v8.400M6.200 29.300h7.400" stroke="#000" stroke-width="1.7" fill="none"/></svg>
<div class="a" style="left:243.8px;top:251.3px;width:109.6px;height:10.2px;background:rgba(255,255,255,0.72);"></div>
<div class="t" style="top:306.22px;font-size:7.0px;line-height:9.1px;left:541.70px;color:#0078a8;letter-spacing:0.210px;"><span id="at1">Leaflet</span></div>
<div class="t" style="top:306.22px;font-size:7.0px;line-height:9.1px;left:566.20px;color:#333;letter-spacing:0.230px;"><span id="at2">| Data ©</span></div>
<div class="t" style="top:306.22px;font-size:7.0px;line-height:9.1px;left:595.60px;color:#0078a8;letter-spacing:-0.079px;"><span id="at3">OpenStreetMap</span></div>
</div>
<div class="bar" style="left:294.6px;top:329px;width:353.4px;height:26.800px;"></div>
<svg class="a" style="left:298.9px;top:337.5px" width="10.6" height="8.2" viewBox="0 0 10.4 8.2"><path d="M0 0h10.400v1.900H0zM0 3.150h10.400v1.900H0zM0 6.300h10.400v1.900H0z" fill="#fff"/></svg>
<div class="cell" style="left:294.6px;top:362.1px;width:66.6px;height:40.3px;background:#f5f7f8;"></div>
<div class="cell" style="left:360.2px;top:362.1px;width:53.0px;height:40.3px;background:#f5f7f8;"></div>
<div class="cell" style="left:412.2px;top:362.1px;width:163.5px;height:40.3px;background:#f5f7f8;"></div>
<div class="cell" style="left:574.7px;top:362.1px;width:74.3px;height:40.3px;background:#f5f7f8;"></div>
<div class="cell" style="left:294.6px;top:401.4px;width:66.6px;height:39.0px;background:#fff;"></div>
<div class="cell" style="left:360.2px;top:401.4px;width:53.0px;height:39.0px;background:#fff;"></div>
<div class="cell" style="left:412.2px;top:401.4px;width:163.5px;height:39.0px;background:#fff;"></div>
<div class="cell" style="left:574.7px;top:401.4px;width:74.3px;height:39.0px;background:#fff;"></div>
<div class="cell" style="left:294.6px;top:439.4px;width:66.6px;height:31.6px;background:#fff;"></div>
<div class="cell" style="left:360.2px;top:439.4px;width:53.0px;height:31.6px;background:#fff;"></div>
<div class="cell" style="left:412.2px;top:439.4px;width:163.5px;height:31.6px;background:#fff;"></div>
<div class="cell" style="left:574.7px;top:439.4px;width:74.3px;height:31.6px;background:#fff;"></div>
<div class="a" style="left:584.6px;top:407.9px;width:52.8px;height:19.7px;background:#06dc1e;"></div>
<div class="t" style="top:10.54px;font-size:7.4px;line-height:9.6px;left:32.10px;font-weight:bold;color:#fff;letter-spacing:0.283px;"><span id="t1">CỔNG THÔNG TIN QUAN TRẮC MÔI TRƯỜNG</span></div>
<div class="t" style="top:20.85px;font-size:11.4px;line-height:14.8px;left:31.60px;font-weight:bold;color:#fff;letter-spacing:0.047px;"><span id="t2">UBND THÀNH PHỐ HÀ NỘI</span></div>
<div class="t" style="top:17.83px;font-size:9.3px;line-height:12.1px;left:412.70px;font-weight:bold;color:#fff;letter-spacing:-0.353px;"><span id="n1">TRANG CHỦ</span></div>
<div class="t" style="top:17.83px;font-size:9.3px;line-height:12.1px;left:485.00px;font-weight:bold;color:#fff;letter-spacing:-0.096px;"><span id="n2">TIN TỨC</span></div>
<div class="t" style="top:17.83px;font-size:9.3px;line-height:12.1px;left:541.60px;font-weight:bold;color:#fff;letter-spacing:-0.101px;"><span id="n3">ĐĂNG NHẬP</span></div>
<div class="t" style="top:17.83px;font-size:9.3px;line-height:12.1px;left:627.00px;font-weight:bold;color:#fff;letter-spacing:-0.2px;"><span id="n4">ENGLISH</span></div>
<div class="t" style="top:62.25px;font-size:13.0px;line-height:16.9px;left:50.40px;font-weight:bold;color:#fff;letter-spacing:-0.473px;"><span id="h1">Chọn điểm đo</span></div>
<div class="t" style="top:95.43px;font-size:8.0px;line-height:10.4px;left:44.00px;color:#444;letter-spacing:0.015px;"><span id="sel">Phạm Văn Đồng</span></div>
<div class="t" style="top:115.14px;font-size:12.3px;line-height:16.0px;left:33.00px;color:#6b6b6b;letter-spacing:-0.099px;"><span id="p1a">Chỉ số Chất lượng không khí ngày 12/11/2019</span></div>
<div class="t" style="top:127.44px;font-size:12.3px;line-height:16.0px;left:33.00px;color:#6b6b6b;"><span id="p1b">08:00</span></div>
<div class="t" style="top:162.75px;font-size:14.0px;line-height:18.2px;left:156.80px;width:200px;margin-left:-100px;text-align:center;font-weight:bold;color:#222;letter-spacing:0.337px;"><span id="a1">AQI 203</span></div>
<div class="t" style="top:182.03px;font-size:9.3px;line-height:12.1px;left:157.00px;width:200px;margin-left:-100px;text-align:center;font-weight:bold;color:#222;letter-spacing:0.042px;"><span id="a2">Mọi người bị ảnh hưởng tới sức khỏe nghiêm</span></div>
<div class="t" style="top:194.93px;font-size:9.3px;line-height:12.1px;left:156.70px;width:200px;margin-left:-100px;text-align:center;font-weight:bold;color:#222;letter-spacing:0.065px;"><span id="a3">trọng hơn</span></div>
<div class="t" style="top:247.93px;font-size:14.5px;line-height:18.9px;left:157.10px;width:200px;margin-left:-100px;text-align:center;font-weight:bold;color:#555;letter-spacing:0.143px;"><span id="nd">Nồng độ</span></div>
<div class="t" style="top:284.24px;font-size:12.3px;line-height:16.0px;left:32.80px;color:#6b6b6b;letter-spacing:0.063px;"><span id="bd">Biểu đồ nồng độ các chỉ tiêu quan trắc</span></div>
<div class="t" style="top:307.21px;font-size:9.2px;line-height:12.0px;left:33.00px;font-weight:bold;font-style:italic;color:#333;letter-spacing:0.151px;"><span id="nt1">(*) Để biết nồng độ giờ cụ thể, vui lòng click vào biểu</span></div>
<div class="t" style="top:319.71px;font-size:9.2px;line-height:12.0px;left:33.00px;font-weight:bold;font-style:italic;color:#333;"><span id="nt2">đồ</span></div>
<div class="t" style="top:333.95px;font-size:13.0px;line-height:16.9px;left:313.00px;font-weight:bold;color:#fff;letter-spacing:-0.462px;"><span id="h2">Bảng quy đổi giá trị AQI</span></div>
<div class="t" style="top:369.81px;font-size:9.2px;line-height:12.0px;left:304.60px;font-weight:bold;color:#555;letter-spacing:0.220px;"><span id="c1a">Giá trị</span></div>
<div class="t" style="top:382.41px;font-size:9.2px;line-height:12.0px;left:304.60px;font-weight:bold;color:#555;letter-spacing:-0.015px;"><span id="c1b">AQI</span></div>
<div class="t" style="top:369.81px;font-size:9.2px;line-height:12.0px;left:370.00px;font-weight:bold;color:#555;letter-spacing:0.383px;"><span id="c2a">Đánh</span></div>
<div class="t" style="top:382.41px;font-size:9.2px;line-height:12.0px;left:370.00px;font-weight:bold;color:#555;letter-spacing:-0.194px;"><span id="c2b">giá</span></div>
<div class="t" style="top:369.81px;font-size:9.2px;line-height:12.0px;left:421.40px;font-weight:bold;color:#555;letter-spacing:0.108px;"><span id="c3">Ảnh hưởng sức khỏe</span></div>
<div class="t" style="top:369.81px;font-size:9.2px;line-height:12.0px;left:584.60px;font-weight:bold;color:#555;letter-spacing:0.105px;"><span id="c4">Màu sắc</span></div>
<div class="t" style="top:409.11px;font-size:9.2px;line-height:12.0px;left:304.60px;color:#777;letter-spacing:0.027px;"><span id="r1">0-50</span></div>
<div class="t" style="top:409.11px;font-size:9.2px;line-height:12.0px;left:370.00px;color:#777;letter-spacing:-0.492px;"><span id="r2">TỐT</span></div>
<div class="t" style="top:409.01px;font-size:9.2px;line-height:12.0px;left:422.00px;color:#777;letter-spacing:0.158px;"><span id="r3a">Chất lượng không khí tốt, không</span></div>
<div class="t" style="top:420.91px;font-size:9.2px;line-height:12.0px;left:422.00px;color:#777;letter-spacing:0.076px;"><span id="r3b">ảnh hưởng tới sức khỏe</span></div>
<div class="t" style="top:412.95px;font-size:8.8px;line-height:11.4px;left:610.90px;width:200px;margin-left:-100px;text-align:center;font-weight:bold;color:#fff;letter-spacing:0.266px;"><span id="r4">XANH</span></div>
</body>
</html>
